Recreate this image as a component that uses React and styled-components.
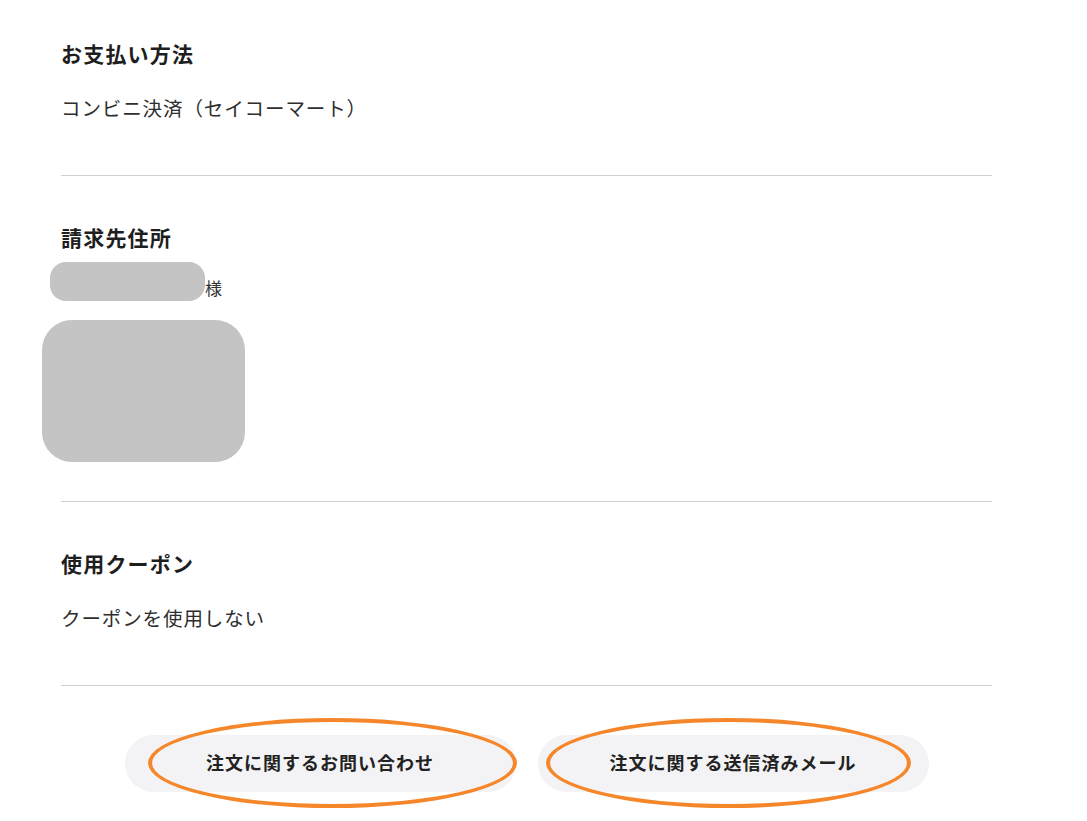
import React from "react";
import styled, { createGlobalStyle } from "styled-components";

const GlobalStyle = createGlobalStyle`
  body {
    margin: 0;
    background: #fff;
    font-family: "Noto Sans CJK JP", "Noto Sans", sans-serif;
    color: #222;
  }
`;

const sections = [
  { id: "pay", title: "お支払い方法", body: "コンビニ決済（セイコーマート）" },
  { id: "bill", title: "請求先住所" },
  { id: "coupon", title: "使用クーポン", body: "クーポンを使用しない" }
];

const buttons = [
  { id: "ask", label: "注文に関するお問い合わせ", mark: { left: 23, width: 369 } },
  { id: "mail", label: "注文に関する送信済みメール", mark: { left: 8, width: 365 } }
];

const App = () => {
  return (
    <>
      <GlobalStyle />
      <Page>
        {sections.map((s, i) => (
          <Section key={s.id} first={i === 0} tight={s.id === "bill"}>
            <Heading>{s.title}</Heading>
            {s.body && <Body>{s.body}</Body>}
            {s.id === "bill" && (
              <>
                <NameRow>
                  <Redact w={155} h={39} r={16} shift={-11} />
                  <Sama>様</Sama>
                </NameRow>
                <Redact w={203} h={142} r={30} shift={-19} top={19} />
              </>
            )}
          </Section>
        ))}
        <ButtonRow>
          {buttons.map(b => (
            <PillButton key={b.id}>
              {b.label}
              <Mark left={b.mark.left} w={b.mark.width} />
            </PillButton>
          ))}
        </ButtonRow>
      </Page>
    </>
  );
};

export default App;

const Page = styled.div`
  width: 931px;
  margin-left: 61px;
  padding-bottom: 40px;
`;

const Section = styled.section`
  border-bottom: 1px solid #cfcfcf;
  padding-top: ${props => (props.first ? "39px" : "47px")};
  padding-bottom: ${props => (props.tight ? "39px" : "53px")};
`;

const Heading = styled.h2`
  margin: 0;
  font-size: 21px;
  line-height: 28px;
  font-weight: 700;
  letter-spacing: 1.2px;
  color: #1e1e1e;
`;

const Body = styled.p`
  margin: 27px 0 0;
  font-size: 19.5px;
  line-height: 28px;
  letter-spacing: 0.9px;
  color: #2e2e2e;
`;

const NameRow = styled.div`
  display: flex;
  align-items: flex-end;
  margin-top: 11px;
`;

const Redact = styled.div`
  width: ${props => props.w}px;
  height: ${props => props.h}px;
  border-radius: ${props => props.r}px;
  margin-left: ${props => props.shift}px;
  margin-top: ${props => props.top || 0}px;
  background: #c4c4c4;
`;

const Sama = styled.span`
  font-size: 17px;
  line-height: 20px;
  color: #333;
  padding-bottom: 3px;
`;

const ButtonRow = styled.div`
  display: flex;
  justify-content: center;
  gap: 22px;
  margin-top: 49px;
`;

const PillButton = styled.button`
  position: relative;
  width: 391px;
  height: 57px;
  padding: 0 0 4px;
  border: none;
  border-radius: 29px;
  background: #f3f3f5;
  font-family: "Noto Sans CJK JP", "Noto Sans", sans-serif;
  font-size: 18px;
  font-weight: 700;
  letter-spacing: 1px;
  color: #222;
  cursor: pointer;
`;

// 手書きの丸囲み（注釈）
const Mark = styled.span`
  position: absolute;
  left: ${props => props.left}px;
  top: -17px;
  width: ${props => props.w}px;
  height: 90px;
  box-sizing: border-box;
  border: 4px solid #f5862a;
  border-radius: 50%;
  pointer-events: none;
`;
